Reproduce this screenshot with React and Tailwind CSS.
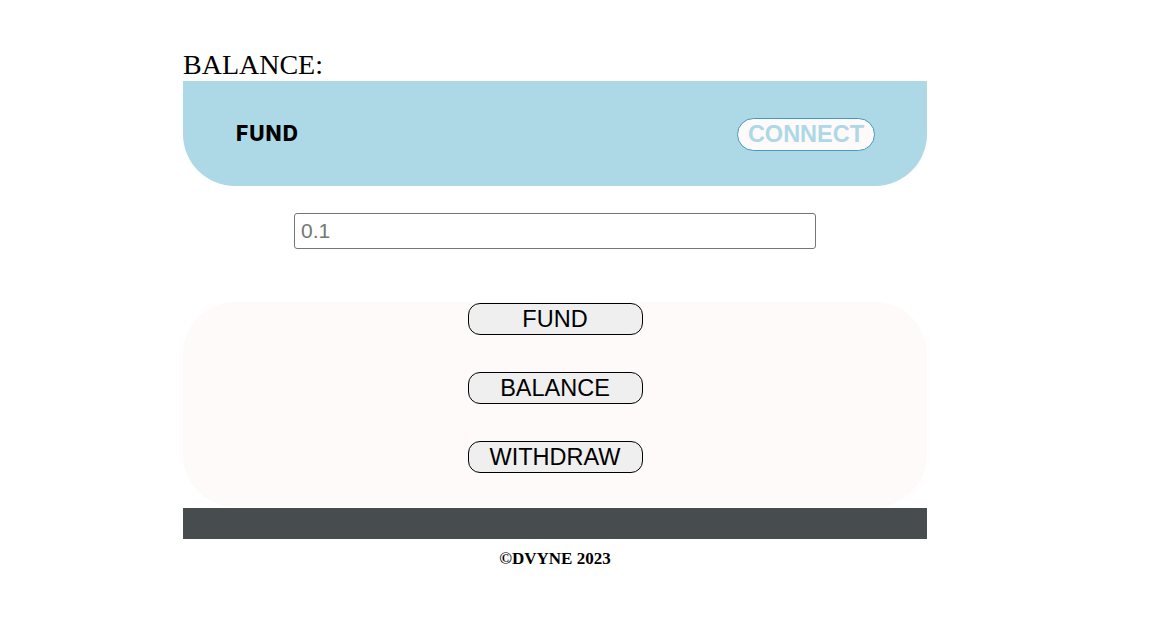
import React, { useState } from "react";

const App = () => {
  const [amount, setAmount] = useState("");

  return (
    <div className="min-h-screen bg-white">
      <div className="ml-[183px] w-[744px] pt-[49px]">
        <h2 className="text-[28px] leading-[32px] text-black font-['Liberation_Serif',serif]">
          BALANCE:
        </h2>
        <div className="h-[105px] bg-[#add8e6] rounded-b-[52px] flex items-center justify-between pl-[53px] pr-[52px]">
          <span className="text-[21px] font-extrabold text-black font-['Inter',sans-serif] tracking-[1px]">
            FUND
          </span>
          <button className="mt-[2px] h-[33px] w-[138px] rounded-full border border-[#3f9ac4] bg-[#fffafa] text-[#add8e6] text-[23.5px] font-bold font-['Liberation_Sans',sans-serif] leading-none pt-[1px]">
            CONNECT
          </button>
        </div>
        <div className="flex justify-center pt-[27px]">
          <input
            type="text"
            value={amount}
            onChange={(e) => setAmount(e.target.value)}
            placeholder="0.1"
            className="w-[522px] h-[36px] border border-[#767676] rounded-[3px] px-[6px] text-[21px] placeholder:text-[#767676] font-['Liberation_Sans',sans-serif] outline-none"
          />
        </div>
        <div className="mt-[53px] h-[205px] bg-[#fffafa] rounded-[52px] flex flex-col items-center gap-[37px] pt-[1px]">
          {["FUND", "BALANCE", "WITHDRAW"].map((label) => (
            <button
              key={label}
              className="w-[175px] h-[32px] bg-[#efefef] border border-black rounded-[12px] text-[23.5px] leading-none text-black font-['Liberation_Sans',sans-serif] pt-[1px]"
            >
              {label}
            </button>
          ))}
        </div>
        <div className="h-[31px] bg-[#474c4f] mt-[1px]"></div>
        <p className="text-center pt-[7px] text-[17px] font-bold text-black font-['Liberation_Serif',serif]">
          ©DVYNE 2023
        </p>
      </div>
    </div>
  );
};

export default App;
